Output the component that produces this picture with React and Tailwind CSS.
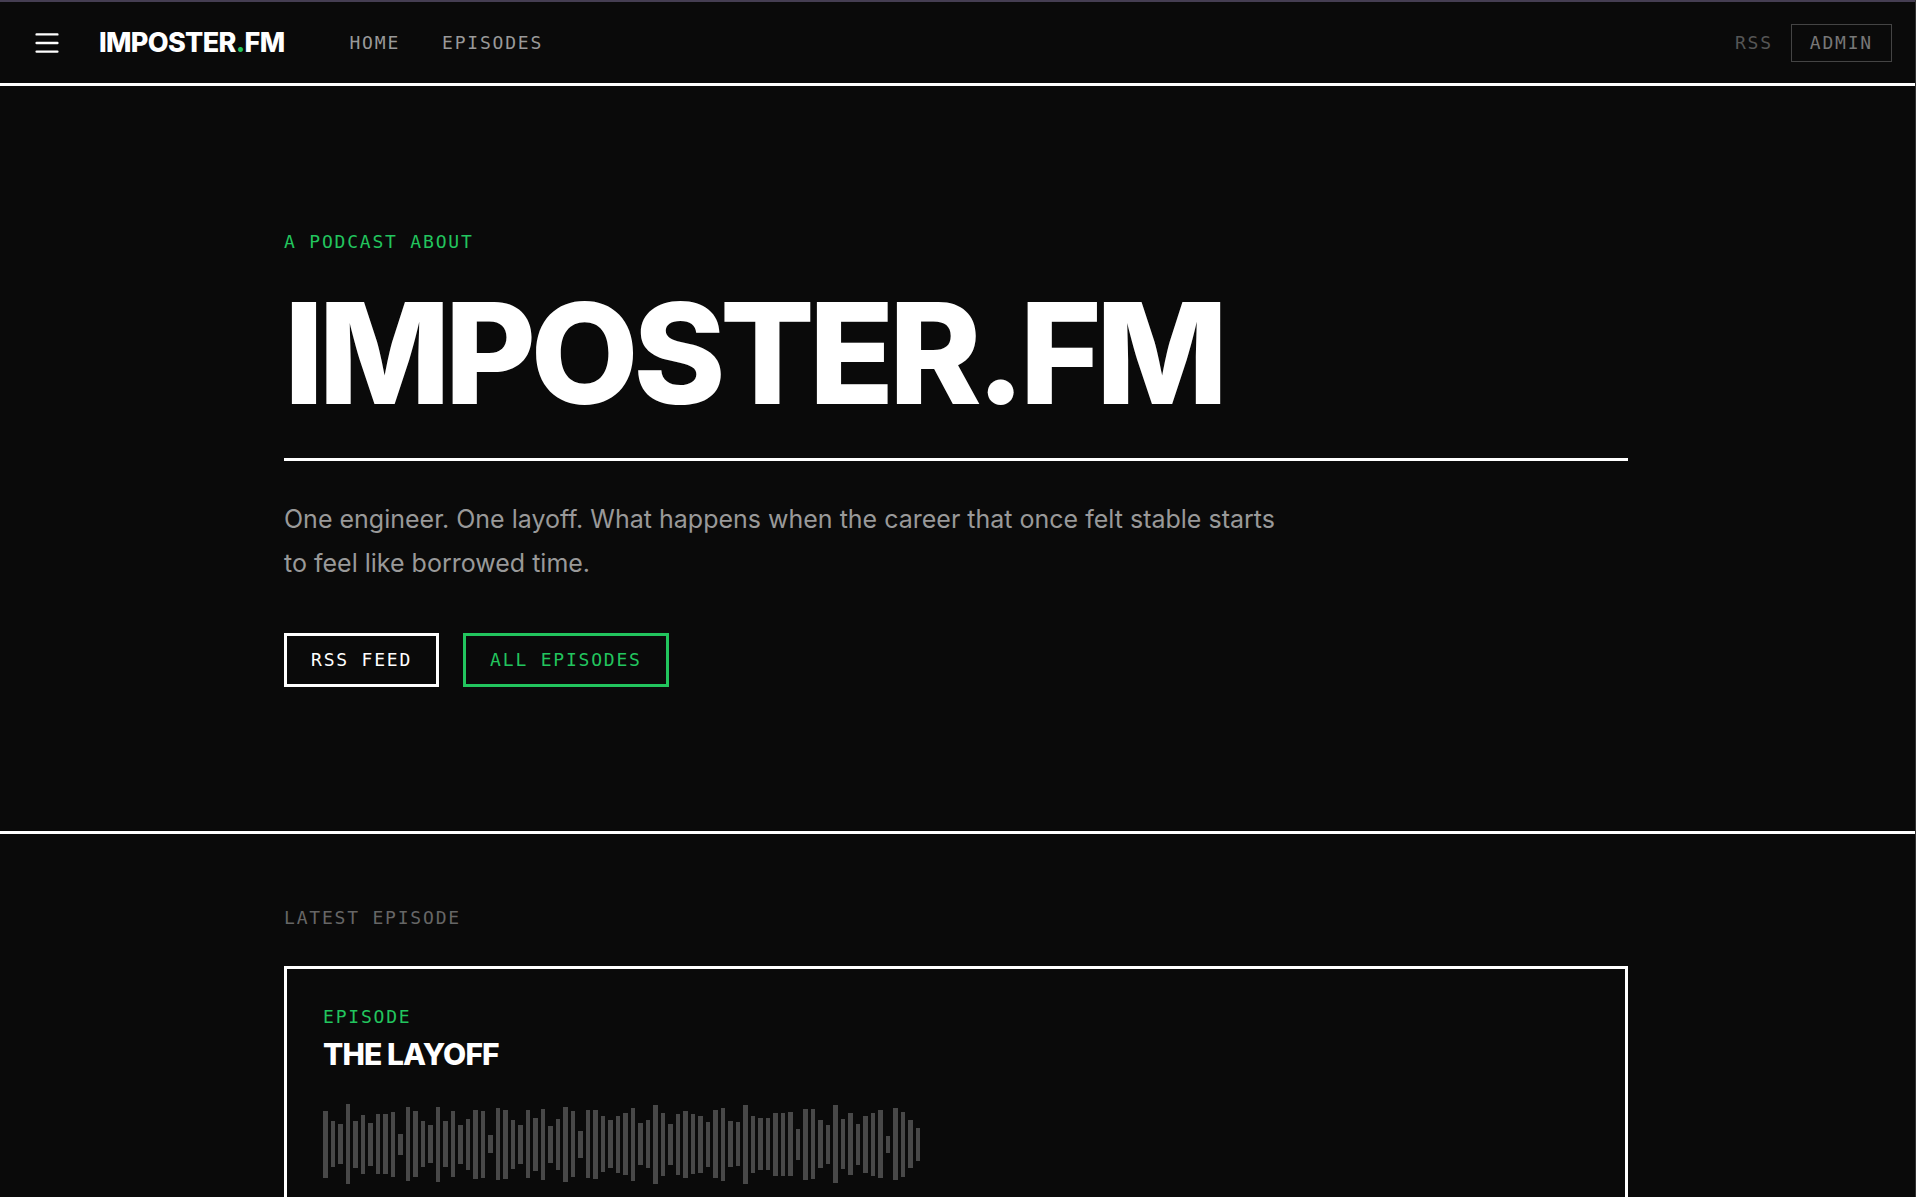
import React from 'react';

const barHeights = [
  67, 46, 40, 80, 47, 59, 43, 60, 60, 65, 21, 74, 66, 46, 38, 75, 46, 66, 39, 51,
  69, 67, 18, 72, 69, 49, 39, 68, 53, 71, 37, 51, 75, 66, 27, 68, 69, 56, 48, 57,
  62, 73, 42, 48, 79, 63, 41, 61, 67, 60, 57, 45, 68, 73, 46, 44, 79, 57, 52, 52,
  63, 63, 64, 31, 71, 70, 48, 39, 78, 50, 62, 41, 57, 63, 68, 17, 72, 65, 48, 33,
];

const Waveform = () => (
  <svg width="600" height="80" viewBox="0 0 600 80" fill="#484848" role="img" aria-label="Waveform">
    {barHeights.map((h, i) => (
      <rect key={i} x={Math.ceil(i * 7.5)} y={Math.ceil((80 - h) / 2)} width={i % 2 ? 4 : 5} height={h} />
    ))}
  </svg>
);

const Header = () => (
  <header className="flex items-center justify-between border-t-2 border-b-[3px] border-t-[#453e52] border-b-white px-6 h-[86px]">
    <div className="flex items-center">
      <button type="button" aria-label="Menu" className="flex h-12 w-[46px] items-center justify-center">
        <svg width="24" height="24" viewBox="0 0 24 24" fill="none" stroke="white" strokeWidth="2.4" strokeLinecap="round">
          <path d="M1.6 3.4h20.8M1.6 12h20.8M1.6 20.6h20.8" />
        </svg>
      </button>
      <a href="#" className="ml-[29px] text-[27px] leading-9 font-extrabold tracking-tight text-white">
        IMPOSTER<span className="text-[#22c55e]">.</span>FM
      </a>
      <nav className="ml-[65px] flex gap-[42px] font-['DejaVu_Sans_Mono',monospace] text-[18px] leading-6 tracking-widest text-[#999999]">
        <a href="#">HOME</a>
        <a href="#episodes">EPISODES</a>
      </nav>
    </div>
    <div className="flex items-center gap-[18px] font-['DejaVu_Sans_Mono',monospace] text-[18px] leading-6 tracking-widest">
      <a href="#rss" className="text-[#555555]">RSS</a>
      <a href="#admin" className="border border-[#444444] px-[18px] py-1.5 text-[#777777]">ADMIN</a>
    </div>
  </header>
);

const Hero = () => (
  <section className="border-b-[3px] border-white py-36 pr-1">
    <div className="mx-auto max-w-[1344px]">
      <p className="font-['DejaVu_Sans_Mono',monospace] text-[18px] leading-6 tracking-widest text-[#22c55e]">A PODCAST ABOUT</p>
      <h1 className="mt-[29px] border-b-[3px] border-white pb-[35px] text-[140px] leading-none font-extrabold tracking-[-0.04em]">IMPOSTER.FM</h1>
      <p className="mt-9 max-w-[1008px] text-[25px] leading-11 text-[#999999]">
        One engineer. One layoff. What happens when the career that once felt stable starts to feel like borrowed time.
      </p>
      <div className="mt-12 flex gap-6 font-['DejaVu_Sans_Mono',monospace] text-[18px] leading-6 tracking-widest">
        <a href="#rss" className="border-[3px] border-white px-6 py-3">RSS FEED</a>
        <a href="#episodes" className="border-[3px] border-[#22c55e] px-6 py-3 text-[#22c55e]">ALL EPISODES</a>
      </div>
    </div>
  </section>
);

const LatestEpisode = () => (
  <section className="py-[72px] pr-1">
    <div className="mx-auto max-w-[1344px]">
      <h2 className="font-['DejaVu_Sans_Mono',monospace] text-[18px] leading-6 tracking-widest text-[#666666]">LATEST EPISODE</h2>
      <article className="mt-9 border-[3px] border-white p-9">
        <p className="font-['DejaVu_Sans_Mono',monospace] text-[18px] leading-6 tracking-widest text-[#22c55e]">EPISODE</p>
        <h3 className="mt-1 mb-[29px] text-[30px] leading-[42px] font-extrabold tracking-[-0.03em]">THE LAYOFF</h3>
        <Waveform />
      </article>
    </div>
  </section>
);

const App = () => {
  return (
    <div className="relative h-screen overflow-hidden bg-[#0a0a0a] font-['Inter',sans-serif] text-white">
      <Header />
      <main>
        <Hero />
        <LatestEpisode />
      </main>
      {/* window edge, drawn over the full-width rules */}
      <div className="pointer-events-none absolute inset-y-0 right-0 w-px bg-[#333333]" />
    </div>
  );
};

export default App;
